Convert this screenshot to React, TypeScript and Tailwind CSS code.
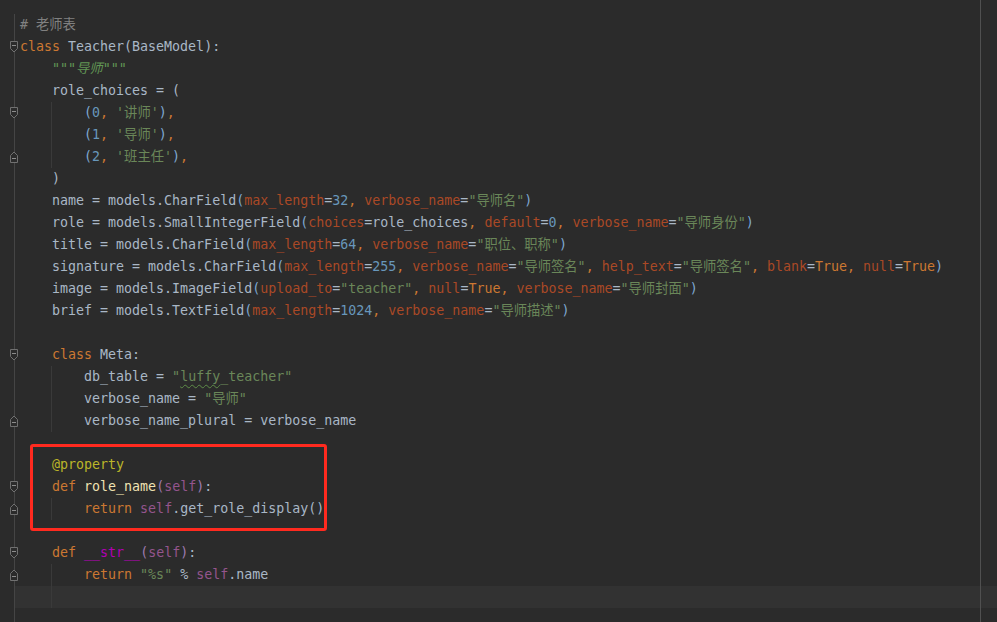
import React from 'react';

// token kinds -> colour classes (Darcula-ish)
const K: Record<string, string> = {
  t: 'text-[#A9B7C6]',
  kw: 'text-[#CC7832]',
  cm: 'text-[#808080]',
  doc: 'text-[#629755] italic',
  num: 'text-[#6897BB]',
  str: 'text-[#6A8759]',
  prm: 'text-[#AA4926]',
  br: 'text-[#7FA8D1]',
  sp: 'text-[#9E7BB0]',
  self: 'text-[#94558D]',
  mg: 'text-[#B200B2]',
  fn: 'text-[#F0E2B2]',
  deco: 'text-[#BBB529]',
  typo: 'text-[#6A8759] underline decoration-wavy decoration-[#5E8C48] decoration-1 underline-offset-[3px]',
};

type Tok = [string, string];
type Fold = 'start' | 'end' | null;

interface Line {
  toks: Tok[];
  fold?: Fold;
  guide?: boolean;
  current?: boolean;
}

const kw = (name: string, val: Tok[]): Tok[] => [[name, 'prm'], ['=', 't'], ...val];
const comma: Tok = [', ', 'kw'];

const lines: Line[] = [
  { toks: [['# 老师表', 'cm']] },
  { toks: [['class', 'kw'], [' Teacher(BaseModel):', 't']], fold: 'start' },
  { toks: [['    """导师"""', 'doc']] },
  { toks: [['    role_choices = (', 't']] },
  { toks: [['        ', 't'], ['(', 'br'], ['0', 'num'], comma, ["'讲师'", 'str'], [')', 'br'], [',', 'kw']], fold: 'start', guide: true },
  { toks: [['        ', 't'], ['(', 'br'], ['1', 'num'], comma, ["'导师'", 'str'], [')', 'br'], [',', 'kw']], guide: true },
  { toks: [['        ', 't'], ['(', 'br'], ['2', 'num'], comma, ["'班主任'", 'str'], [')', 'br'], [',', 'kw']], fold: 'end', guide: true },
  { toks: [['    )', 't']] },
  {
    toks: [['    name = models.CharField', 't'], ['(', 'br'], ...kw('max_length', [['32', 'num']]), comma, ...kw('verbose_name', [['"导师名"', 'str']]), [')', 'br']],
  },
  {
    toks: [['    role = models.SmallIntegerField', 't'], ['(', 'br'], ...kw('choices', [['role_choices', 't']]), comma, ...kw('default', [['0', 'num']]), comma, ...kw('verbose_name', [['"导师身份"', 'str']]), [')', 'br']],
  },
  {
    toks: [['    title = models.CharField', 't'], ['(', 'br'], ...kw('max_length', [['64', 'num']]), comma, ...kw('verbose_name', [['"职位、职称"', 'str']]), [')', 'br']],
  },
  {
    toks: [['    signature = models.CharField', 't'], ['(', 'br'], ...kw('max_length', [['255', 'num']]), comma, ...kw('verbose_name', [['"导师签名"', 'str']]), comma, ...kw('help_text', [['"导师签名"', 'str']]), comma, ...kw('blank', [['True', 'kw']]), comma, ...kw('null', [['True', 'kw']]), [')', 'br']],
  },
  {
    toks: [['    image = models.ImageField', 't'], ['(', 'br'], ...kw('upload_to', [['"teacher"', 'str']]), comma, ...kw('null', [['True', 'kw']]), comma, ...kw('verbose_name', [['"导师封面"', 'str']]), [')', 'br']],
  },
  {
    toks: [['    brief = models.TextField', 't'], ['(', 'br'], ...kw('max_length', [['1024', 'num']]), comma, ...kw('verbose_name', [['"导师描述"', 'str']]), [')', 'br']],
  },
  { toks: [] },
  { toks: [['    ', 't'], ['class', 'kw'], [' Meta:', 't']], fold: 'start' },
  { toks: [['        db_table = ', 't'], ['"', 'str'], ['luffy', 'typo'], ['_teacher"', 'str']], guide: true },
  { toks: [['        verbose_name = ', 't'], ['"导师"', 'str']], guide: true },
  { toks: [['        verbose_name_plural = verbose_name', 't']], fold: 'end', guide: true },
  { toks: [] },
  { toks: [['    ', 't'], ['@property', 'deco']] },
  { toks: [['    ', 't'], ['def', 'kw'], [' ', 't'], ['role_name', 'fn'], ['(', 'sp'], ['self', 'self'], [')', 'sp'], [':', 't']], fold: 'start' },
  { toks: [['        ', 't'], ['return', 'kw'], [' ', 't'], ['self', 'self'], ['.get_role_display()', 't']], fold: 'end', guide: true },
  { toks: [] },
  { toks: [['    ', 't'], ['def', 'kw'], [' ', 't'], ['__str__', 'mg'], ['(', 'sp'], ['self', 'self'], [')', 'sp'], [':', 't']], fold: 'start' },
  { toks: [['        ', 't'], ['return', 'kw'], [' ', 't'], ['"%s"', 'str'], [' % ', 't'], ['self', 'self'], ['.name', 't']], fold: 'end', guide: true },
  { toks: [], current: true, guide: true },
  { toks: [] },
];

const FoldMark: React.FC<{ kind: 'start' | 'end' }> = ({ kind }) => (
  <svg className="relative z-10 -mr-[5px] shrink-0" width="10" height="12" viewBox="0 0 10 12">
    {kind === 'start' ? (
      <path d="M1.5 0.5H8.5V7.5L5 11L1.5 7.5Z" fill="#2B2B2B" stroke="#707070" strokeWidth="1" />
    ) : (
      <path d="M1.5 11.5H8.5V4.5L5 1L1.5 4.5Z" fill="#2B2B2B" stroke="#707070" strokeWidth="1" />
    )}
    <path d={kind === 'start' ? 'M3 4.5H7' : 'M3 7.5H7'} stroke="#8C8C8C" strokeWidth="1" />
  </svg>
);

const CodeLine: React.FC<{ line: Line }> = ({ line }) => (
  <div className="flex h-[22px]">
    <div className="flex h-full w-[15px] shrink-0 items-center justify-end border-r border-[#454545]">
      {line.fold && <FoldMark kind={line.fold} />}
    </div>
    <div className={`relative h-full flex-1 whitespace-pre pl-[5px] leading-[22px] ${line.current ? 'bg-[#323232]' : ''}`}>
      {line.guide && <span className="absolute left-[36px] top-0 h-full w-px bg-[#3A3A3A]" />}
      {line.toks.map(([text, kind], i) => (
        <span key={i} className={K[kind]}>
          {text}
        </span>
      ))}
    </div>
  </div>
);

export default function App() {
  return (
    <div className="relative h-[622px] w-[997px] overflow-hidden bg-[#2B2B2B] font-['DejaVu_Sans_Mono','Noto_Sans_CJK_SC',monospace] text-[13.3px]">
      <div className="flex flex-col pt-[14px]">
        {lines.map((l, i) => (
          <CodeLine key={i} line={l} />
        ))}
      </div>

      {/* right margin guide */}
      <div className="pointer-events-none absolute left-[980px] top-0 h-full w-px bg-[#505050]" />

      {/* red annotation box */}
      <div className="pointer-events-none absolute left-[30px] top-[444px] h-[87px] w-[297px] rounded-[3px] border-[3px] border-[#FF2A1F]" />
    </div>
  );
}
